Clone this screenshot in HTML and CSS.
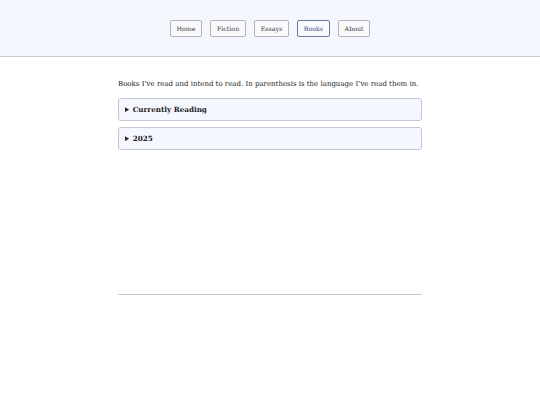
FILE: index.html
```html
<!DOCTYPE html>
<html>
<head>
<meta charset="utf-8">
<link rel="stylesheet" href="styles.css">
</head>
<body>
<header class="site-header">
  <nav class="nav">
    <a class="nav-btn" href="#">Home</a>
    <a class="nav-btn" href="#">Fiction</a>
    <a class="nav-btn" href="#">Essays</a>
    <a class="nav-btn active" href="#">Books</a>
    <a class="nav-btn" href="#">About</a>
  </nav>
</header>
<main class="content">
  <p class="intro">Books I’ve read and intend to read. In parenthesis is the language I’ve read them in.</p>
  <details class="section"><summary>Currently Reading</summary></details>
  <details class="section"><summary>2025</summary></details>
  <div class="spacer"></div>
  <hr class="rule">
</main>
</body>
</html>
```
FILE: styles.css
```css
html, body { margin: 0; padding: 0; background: #fff; }
body { font-family: "DejaVu Serif", serif; color: #222; }
.site-header {
  background: #f5f7fe;
  border-bottom: 1px solid #c9c9d6;
  height: 57px;
  box-sizing: border-box;
  display: flex;
  align-items: center;
  justify-content: center;
}
.nav { display: flex; gap: 8.5px; }
.nav-btn {
  font-size: 6.3px;
  color: #333;
  text-decoration: none;
  border: 1px solid #b3b3bd;
  border-radius: 2px;
  background: #fafafc;
  padding: 4px 5.5px;
}
.nav-btn.active { color: #3a4a8a; border-color: #6a78a8; }
.content { width: 304px; margin: 0 auto; padding-top: 23px; }
.intro { font-size: 7px; margin: 0 0 10px; color: #222; }
.section {
  background: #f5f7fe;
  border: 1px solid #c6c6d8;
  border-radius: 3px;
  margin-bottom: 6px;
}
.section summary {
  font-weight: bold;
  font-size: 7.2px;
  padding: 6px 6px;
  cursor: pointer;
}
.spacer { height: 138px; }
.rule { border: 0; border-top: 1px solid #c8c8c8; margin: 0; }
```
